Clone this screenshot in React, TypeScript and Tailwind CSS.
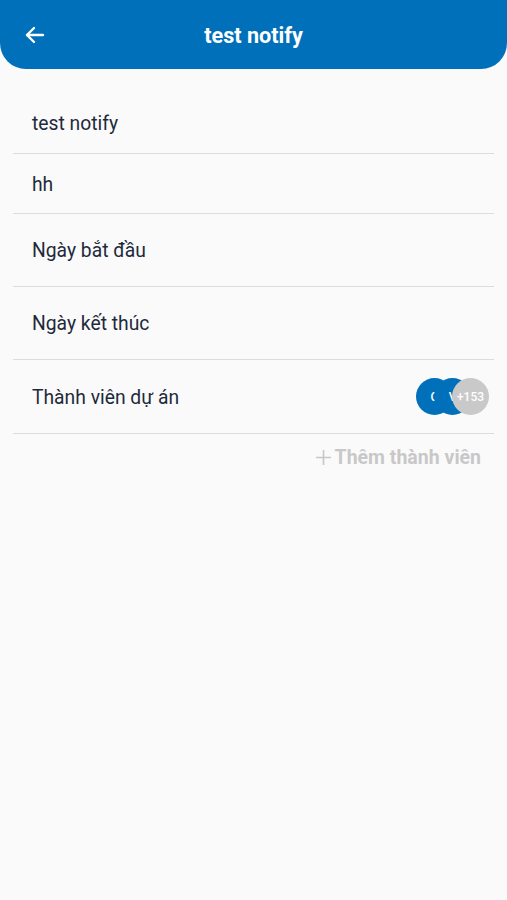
import React from 'react';

const Row: React.FC<{ label: string; h: string; children?: React.ReactNode }> = ({ label, h, children }) => (
  <div className={`mx-[13px] flex items-center justify-between border-b border-[#dcdcdc] pl-[19px] pr-[5px] ${h}`}>
    <span className="pt-[3px] text-[19.3px] text-[#1e2a3b]">{label}</span>
    {children}
  </div>
);

const App: React.FC = () => {
  return (
    <div className="min-h-screen bg-[#fafafa]" style={{ fontFamily: 'Roboto, "Noto Sans", sans-serif' }}>
      {/* Header */}
      <div className="relative flex h-[69px] items-center justify-center rounded-b-[26px] bg-[#0070ba]">
        <button className="absolute left-[23px] top-[23px] text-white">
          <svg width="24" height="24" viewBox="0 0 24 24" fill="none" stroke="currentColor" strokeWidth="2.4" strokeLinecap="round" strokeLinejoin="round">
            <path d="M20 12H4" />
            <path d="M11 5l-7 7 7 7" />
          </svg>
        </button>
        <h1 className="pt-[4px] text-[21.6px] font-bold text-white">test notify</h1>
      </div>

      <div className="pt-[24px]">
        <Row label="test notify" h="h-[61px]" />
        <Row label="hh" h="h-[60px]" />
        <Row label="Ngày bắt đầu" h="h-[73px]" />
        <Row label="Ngày kết thúc" h="h-[73px]" />
        <Row label="Thành viên dự án" h="h-[74px]">
          <div className="flex items-center">
            <div className="flex h-[37px] w-[37px] items-center justify-center rounded-full bg-[#0070ba] text-[12px] font-medium text-white">
              C
            </div>
            <div className="-ml-[19px] flex h-[37px] w-[37px] items-center justify-center rounded-full bg-[#0070ba] text-[12px] font-medium text-white">
              V
            </div>
            <div className="-ml-[19px] flex h-[37px] w-[37px] items-center justify-center rounded-full bg-[#c9c9c9] text-[12px] font-medium text-white">
              +153
            </div>
          </div>
        </Row>
        <div className="flex justify-end pr-[26px] pt-[9px]">
          <span className="flex items-center gap-[3px] text-[19.5px] font-bold text-[#c8c8c8]">
            <svg width="17" height="17" viewBox="0 0 18 18" stroke="currentColor" strokeWidth="1.8">
              <path d="M9 1v16M1 9h16" />
            </svg>
            Thêm thành viên
          </span>
        </div>
      </div>
    </div>
  );
};

export default App;
